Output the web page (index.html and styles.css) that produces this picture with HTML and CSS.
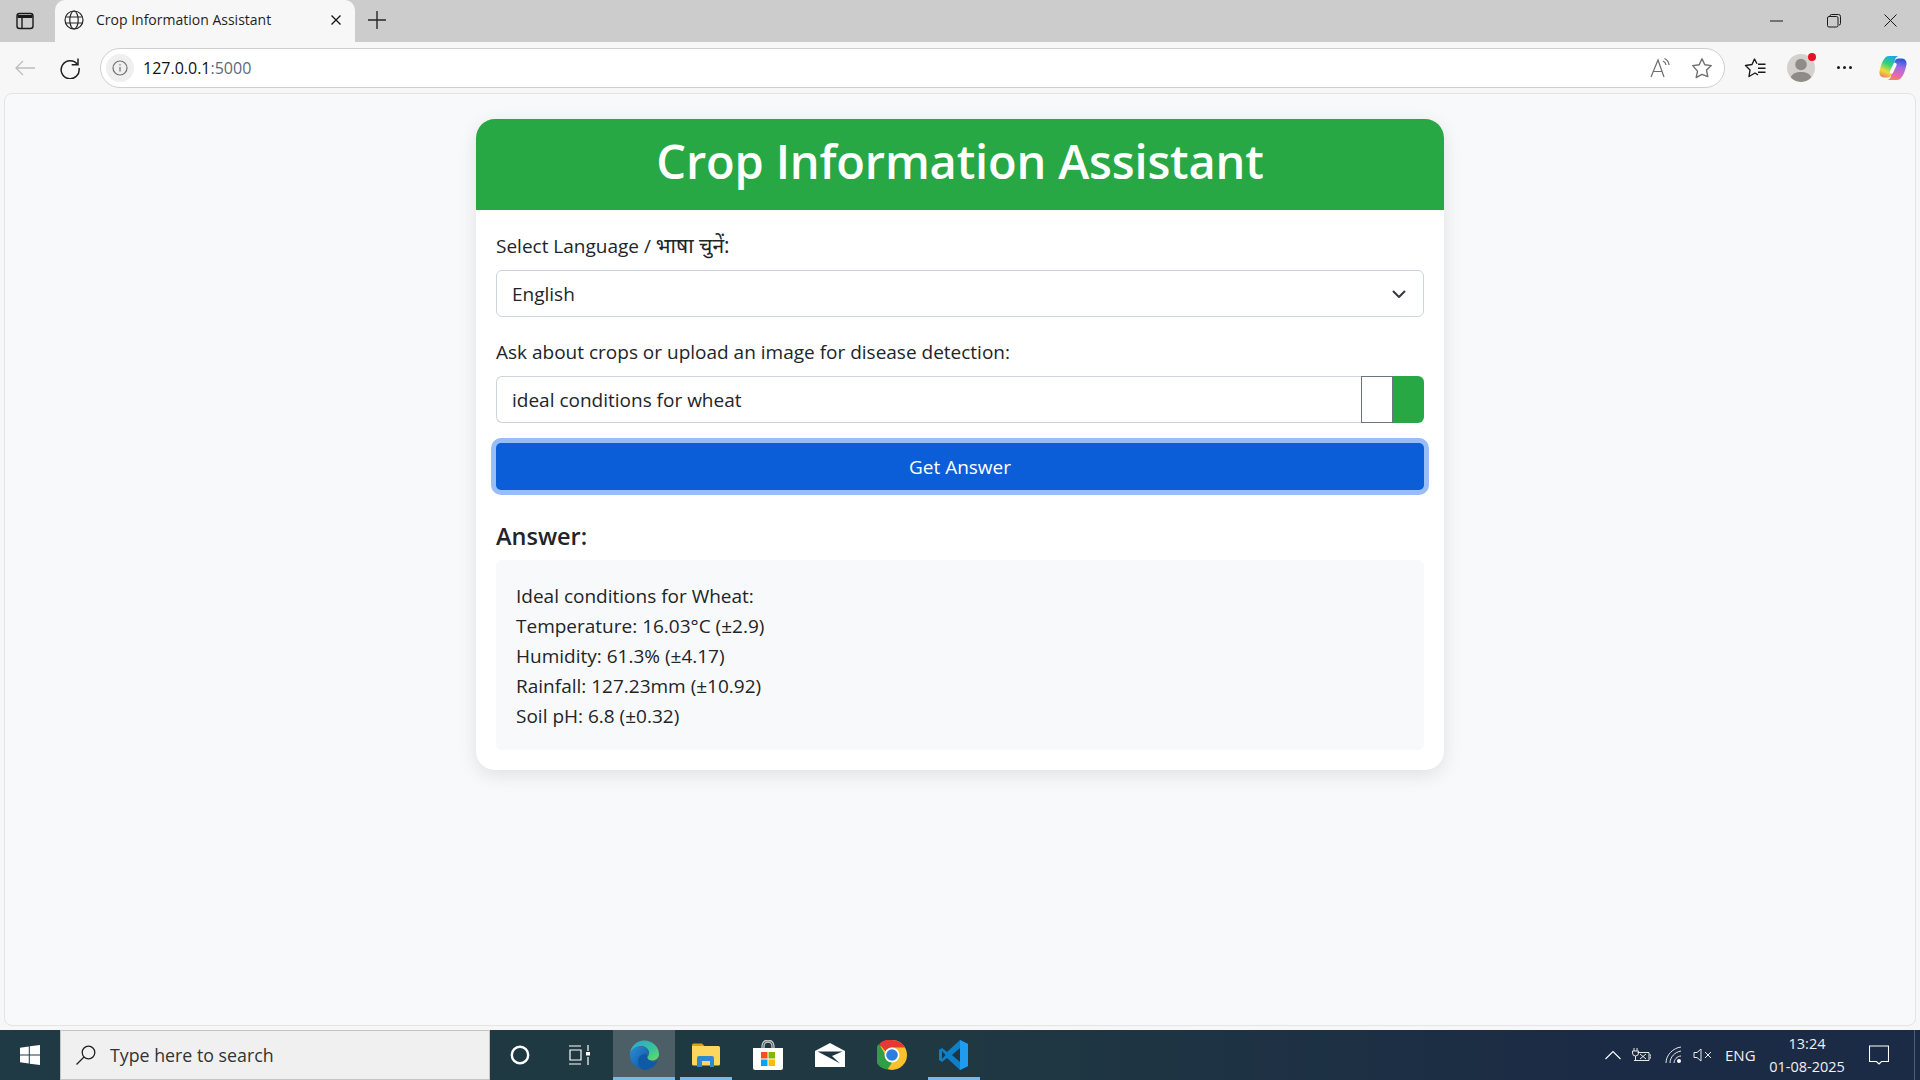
FILE: index.html
```html
<!DOCTYPE html>
<html lang="en">
<head>
<meta charset="utf-8">
<title>Crop Information Assistant</title>
<link rel="stylesheet" href="styles.css">
</head>
<body>
<header class="tabstrip">
  <div class="strip-btn">
    <svg width="20" height="20" viewBox="0 0 20 20" fill="none" stroke="#1a1a1a" stroke-width="1.4"><rect x="2" y="2.5" width="16" height="15" rx="2.5"/><path d="M2.5 5.5h15" stroke-width="3"/><path d="M7 6v11"/></svg>
  </div>
  <div class="tab">
    <svg class="tab-globe" width="20" height="20" viewBox="0 0 20 20" fill="none" stroke="#262626" stroke-width="1.2"><circle cx="10" cy="10" r="9"/><ellipse cx="10" cy="10" rx="4.2" ry="9"/><path d="M1.6 7h16.8M1.6 13h16.8"/></svg>
    <span class="tab-title">Crop Information Assistant</span>
    <svg class="tab-close" width="12" height="12" viewBox="0 0 12 12" stroke="#1a1a1a" stroke-width="1.4"><path d="M1.5 1.5l9 9M10.5 1.5l-9 9"/></svg>
  </div>
  <svg class="new-tab" width="18" height="18" viewBox="0 0 18 18" stroke="#262626" stroke-width="1.4"><path d="M9 0v18M0 9h18"/></svg>
  <div class="win-controls">
    <svg width="14" height="14" viewBox="0 0 14 14" stroke="#1a1a1a" stroke-width="1"><path d="M0 7h13"/></svg>
    <svg width="14" height="14" viewBox="0 0 14 14" fill="none" stroke="#1a1a1a" stroke-width="1"><rect x=".5" y="2.5" width="10.5" height="10.5" rx="1.5"/><path d="M3 2.500V2a1.500 1.500 0 0 1 1.500-1.500H11.500A2 2 0 0 1 13.500 2.500v7A1.500 1.500 0 0 1 12 11"/></svg>
    <svg width="14" height="14" viewBox="0 0 14 14" stroke="#1a1a1a" stroke-width="1"><path d="M.5.500l12 12M12.500.500l-12 12"/></svg>
  </div>
</header>

<nav class="toolbar">
  <svg class="tool-back" width="20" height="16" viewBox="0 0 20 16" fill="none" stroke="#bdbdbd" stroke-width="1.3"><path d="M20 8H1M8 1L1 8l7 7"/></svg>
  <svg class="tool-reload" width="22" height="22" viewBox="0 0 22 22" fill="none" stroke="#1f1f1f" stroke-width="1.5"><path d="M18.500 7.500A9 9 0 1 0 20 11"/><path d="M19 1.500v6.300h-6.300"/></svg>
  <div class="address">
    <span class="info-chip"><svg width="16" height="16" viewBox="0 0 16 16" fill="none" stroke="#707070" stroke-width="1.2"><circle cx="8" cy="8" r="7"/><path d="M8 7v4.500M8 4.200v1.300"/></svg></span>
    <span class="url">127.0.0.1<span class="url-port">:5000</span></span>
    <svg class="addr-read" width="22" height="22" viewBox="0 0 22 22" fill="none" stroke="#6f6f6f" stroke-width="1.2"><path d="M1 20L8 3l6 17M3.500 14.500h9"/><path d="M13 4a5 5 0 0 1 3 4M14.500 1.500a8 8 0 0 1 4.500 6.500"/></svg>
    <svg class="addr-star" width="22" height="22" viewBox="0 0 22 22" fill="none" stroke="#6f6f6f" stroke-width="1.4" stroke-linejoin="round"><path d="M11 1.800l2.800 6 6.500.8-4.800 4.500 1.300 6.500L11 17.300l-5.800 3.300 1.300-6.500L1.700 8.600l6.500-.8z"/></svg>
  </div>
  <svg class="tool-fav" width="22" height="22" viewBox="0 0 22 22" fill="none" stroke="#1a1a1a" stroke-width="1.4" stroke-linejoin="round"><path d="M13 6.800L10.500 2 8 7.500 1.500 8.500 6 13l-1 6.500 6-3.500 3 1.800"/><path d="M14 7.200h7.500M14 11.200h7.500M14 15.200h7.500"/></svg>
  <div class="profile">
    <svg width="28" height="28" viewBox="0 0 28 28"><circle cx="14" cy="14" r="14" fill="#d3d1ce"/><circle cx="14" cy="10.500" r="5.800" fill="#8f8b87"/><path d="M3.800 23.500C5 19.500 9 18 14 18s9 1.500 10.200 5.500A14 14 0 0 1 3.800 23.500z" fill="#8f8b87"/></svg>
    <span class="profile-dot"></span>
  </div>
  <div class="tool-dots"><i></i><i></i><i></i></div>
  <svg class="copilot" width="28" height="28" viewBox="0 0 28 28">
    <defs>
      <linearGradient id="cpa" x1=".7" y1="0" x2=".3" y2="1"><stop offset="0" stop-color="#1aa5ee"/><stop offset=".4" stop-color="#2fd07d"/><stop offset=".75" stop-color="#f0dc3c"/><stop offset="1" stop-color="#f08a5a"/></linearGradient>
      <linearGradient id="cpb" x1=".6" y1="0" x2=".4" y2="1"><stop offset="0" stop-color="#2458d8"/><stop offset=".4" stop-color="#a46be6"/><stop offset=".8" stop-color="#e868b0"/><stop offset="1" stop-color="#f28a4a"/></linearGradient>
    </defs>
    <path d="M10 2h9.500c-2 .5-3 2-3.500 4l-3.500 14c-.7 2.500-2 3.500-4 3.500H5c-3 0-5-3-4.500-6C2 10 5 2 10 2z" fill="url(#cpa)"/>
    <path d="M18 26H8.500c2-.5 3-2 3.500-4l3.500-14c.7-2.500 2-3.500 4-3.500H23c3 0 5 3 4.500 6C26 18 23 26 18 26z" fill="url(#cpb)"/>
    <path d="M16 10.500L12.500 18" stroke="#fff" stroke-width="3.400" stroke-linecap="round"/>
  </svg>
</nav>

<main class="viewport">
  <section class="card">
    <h1 class="card-head">Crop Information Assistant</h1>
    <div class="card-body">
      <label class="field-label">Select Language / <span class="hindi">भाषा चुनें:</span></label>
      <div class="control select-control">
        <span>English</span>
        <svg width="16" height="16" viewBox="0 0 16 16" fill="none" stroke="#343a40" stroke-width="2" stroke-linecap="round" stroke-linejoin="round"><path d="M2.500 5.500L8 11l5.500-5.500"/></svg>
      </div>
      <label class="field-label label-tight">Ask about crops or upload an image for disease detection:</label>
      <div class="input-group">
        <div class="control text-control">ideal conditions for wheat</div>
        <span class="file-btn"></span>
        <span class="green-btn"></span>
      </div>
      <button class="submit">Get Answer</button>
      <h2 class="answer-title">Answer:</h2>
      <div class="answer">
        <div>Ideal conditions for Wheat:</div>
        <div>Temperature: 16.03°C (±2.9)</div>
        <div>Humidity: 61.3% (±4.17)</div>
        <div>Rainfall: 127.23mm (±10.92)</div>
        <div>Soil pH: 6.8 (±0.32)</div>
      </div>
    </div>
  </section>
</main>

<footer class="taskbar">
  <div class="start">
    <svg width="20" height="20" viewBox="0 0 20 20" fill="#fff"><path d="M0 2.800l8.800-1.300v8H0zM9.800 1.300L20 0v9.500H9.800zM0 10.500h8.800v8L0 17.200zM9.800 10.500H20V20L9.800 18.700z"/></svg>
  </div>
  <div class="search">
    <svg width="20" height="20" viewBox="0 0 20 20" fill="none" stroke="#1f1f1f" stroke-width="1.300"><circle cx="12.500" cy="7.500" r="6.300"/><path d="M8 12L.5 19.500"/></svg>
    <span>Type here to search</span>
  </div>
  <div class="task-icons">
    <div class="task"><svg width="20" height="20" viewBox="0 0 20 20" fill="none" stroke="#fff" stroke-width="2.400"><circle cx="10" cy="10" r="8.200"/></svg></div>
    <div class="task task-view"><svg width="22" height="20" viewBox="0 0 22 20" fill="none" stroke="#fff" stroke-width="1.200"><path d="M1 1h12M1 19h12M2 5h11v10H2zM20 0v6M20 12v8"/><rect x="18" y="7" width="4" height="3.500" fill="#fff" stroke="none"/></svg></div>
    <div class="task task-active task-on">
      <svg width="30" height="30" viewBox="0 0 30 30">
        <defs>
          <linearGradient id="eda" x1="0" y1="0" x2="1" y2="1"><stop offset="0" stop-color="#2aa6d8"/><stop offset=".6" stop-color="#35c59a"/><stop offset="1" stop-color="#6fdc62"/></linearGradient>
          <linearGradient id="edb" x1="0" y1="0" x2="1" y2="1"><stop offset="0" stop-color="#2b8fd8"/><stop offset="1" stop-color="#0c4f9e"/></linearGradient>
        </defs>
        <path d="M1 13C2 6 8 .5 15 .5 24 .5 30 7 30 14c0 4-3 6.500-7 6.500-3 0-5-1-5-2.500 0-1 2-2 2-5 0-4-3.500-7-7.500-7C8 6 3 9 1 13z" fill="url(#eda)"/>
        <path d="M1 13c2-4 6.500-6.500 11.500-6.500 4 0 7.500 3 7.500 6 0 1-1 1.500-3 1.500-5 0-8 3-8 7 0 3 2 6 5 8C7 29 0 22 1 13z" fill="url(#edb)"/>
        <path d="M9 21c0-4 3-7 8-7 1 0 1 1 1 2 0 3 3 5.500 7 5.500 1.500 0 3-.5 4-1-2 5-7.500 9.500-14 9.500-3.500-1.500-6-5-6-9z" fill="#0f5aa8"/>
      </svg>
    </div>
    <div class="task task-on">
      <svg width="28" height="24" viewBox="0 0 28 24">
        <path d="M0 2a1.500 1.500 0 0 1 1.500-1.500H10l2.500 2.500h-12.500z" fill="#dfa010"/>
        <path d="M0 3h26.500A1.500 1.500 0 0 1 28 4.500V21a1.500 1.500 0 0 1-1.500 1.500h-25A1.500 1.500 0 0 1 0 21z" fill="#fdd65e"/>
        <path d="M5 24v-9a2 2 0 0 1 2-2h13a2 2 0 0 1 2 2v9h-4v-6H10v6z" fill="#2a8ad4"/>
      </svg>
    </div>
    <div class="task">
      <svg width="30" height="30" viewBox="0 0 30 30">
        <path d="M9 9V6a6 6 0 0 1 12 0v3M11 9V6a4 4 0 0 1 8 0v3" fill="none" stroke="#c9c9c9" stroke-width="1.300"/>
        <path d="M0 8h30v20a2 2 0 0 1-2 2H2a2 2 0 0 1-2-2z" fill="#fff"/>
        <rect x="8" y="12" width="6.500" height="6.500" fill="#f25022"/><rect x="15.500" y="12" width="6.500" height="6.500" fill="#7fba00"/><rect x="8" y="19.500" width="6.500" height="6.500" fill="#00a4ef"/><rect x="15.500" y="19.500" width="6.500" height="6.500" fill="#ffb900"/>
      </svg>
    </div>
    <div class="task">
      <svg width="30" height="24" viewBox="0 0 30 24">
        <path d="M15 0l15 8v16H0V8z" fill="#fff"/>
        <path d="M2.500 8.500h25L17 13l8 7.500L15 15z" fill="#1f3640"/>
      </svg>
    </div>
    <div class="task">
      <svg width="30" height="30" viewBox="0 0 30 30">
        <circle cx="15" cy="15" r="15" fill="#fbc02d"/>
        <path d="M15 0a15 15 0 0 1 13 7.500H15a7.500 7.500 0 0 0-6.500 3.750L2 3.900A15 15 0 0 1 15 0z" fill="#e53935"/>
        <path d="M2 3.900l6.500 11.100a7.500 7.500 0 0 0 6.500 7.500l-4.600 7A15 15 0 0 1 2 3.900z" fill="#2f9e44"/>
        <circle cx="15" cy="15" r="7.500" fill="#fff"/><circle cx="15" cy="15" r="5.800" fill="#2f7de1"/>
      </svg>
    </div>
    <div class="task task-on">
      <svg width="30" height="30" viewBox="0 0 30 30">
        <path d="M21 0l8 4v22l-8 4L8 18l-5 4-3-2v-10l3-2 5 4z" fill="#0e7fc9"/>
        <path d="M21 0l8 4v22l-8 4z" fill="#1f9cf0"/>
        <path d="M21 8l-8 7 8 7z" fill="#1f3640"/>
        <path d="M3 11v8l3.500-4z" fill="#1f3640"/>
      </svg>
    </div>
  </div>
  <div class="tray">
    <svg class="tray-chevron" width="16" height="10" viewBox="0 0 16 10" fill="none" stroke="#fff" stroke-width="1.100"><path d="M.5 9L8 1.500 15.500 9"/></svg>
    <svg class="tray-battery" width="20" height="14" viewBox="0 0 20 14" fill="none" stroke="#e8e8e8" stroke-width="1"><path d="M3 0v3M6 0v3M1.500 3h6v2a3 3 0 0 1-6 0zM4.500 8v4"/><path d="M6.500 4.500H18v8H3"/><path d="M18.500 7h1.500v3h-1.500M9 6l6 5M15 6l-6 5"/></svg>
    <svg class="tray-wifi" width="20" height="18" viewBox="0 0 20 18" fill="none" stroke="#e8e8e8" stroke-width="1"><path d="M1 17C1 9 8 2 16 1M5 17C5 11 10 6 16 5M9 17c0-3 3-7 7-7"/><circle cx="14" cy="15" r="2" fill="#fff" stroke="none"/></svg>
    <svg class="tray-volume" width="20" height="14" viewBox="0 0 20 14" fill="none" stroke="#e8e8e8" stroke-width="1"><path d="M1 4.500h3L8 1v12L4 9.500H1zM12 4l6 6M18 4l-6 6"/></svg>
    <span class="tray-lang">ENG</span>
    <div class="clock"><span>13:24</span><span>01-08-2025</span></div>
    <svg class="tray-notif" width="20" height="20" viewBox="0 0 20 20" fill="none" stroke="#fff" stroke-width="1.100"><path d="M.5 1h19v15.500h-7L10 19l-2.500-2.500h-7z"/></svg>
    <span class="show-desktop"></span>
  </div>
</footer>
</body>
</html>
```

FILE: styles.css
```css
* { box-sizing: border-box; }
html, body { height: 100%; }
body {
  margin: 0;
  display: flex;
  flex-direction: column;
  height: 100vh;
  overflow: hidden;
  background: #f7f7f7;
  font-family: "Open Sans", "Noto Sans", "Noto Sans Devanagari", sans-serif;
  color: #212529;
}
svg { display: block; flex: none; }

/* browser chrome */
.tabstrip {
  height: 42px;
  flex: none;
  background: #cccccc;
  display: flex;
  align-items: center;
}
.strip-btn { width: 55px; padding-left: 15px; }
.tab {
  width: 300px;
  height: 42px;
  background: #f7f7f7;
  border-radius: 10px 10px 0 0;
  display: flex;
  align-items: center;
  padding: 0 13px 2px 9px;
}
.tab-title {
  flex: 1;
  margin-left: 12px;
  margin-bottom: 2px;
  font-size: 14px;
  color: #1f1f1f;
  white-space: nowrap;
}
.new-tab { margin-left: 13px; margin-bottom: 2px; }
.win-controls {
  margin-left: auto;
  display: flex;
  gap: 43px;
  padding-right: 22px;
  align-items: center;
}

.toolbar {
  height: 50px;
  flex: none;
  display: flex;
  align-items: center;
  background: #f7f7f7;
  padding-top: 1px;
}
.tool-back { margin-left: 15px; }
.tool-reload { margin-left: 24px; }
.address {
  width: 1625px;
  height: 40px;
  margin-left: 19px;
  background: #fff;
  border: 1px solid #cfcfcf;
  border-radius: 20px;
  display: flex;
  align-items: center;
  padding-left: 5px;
}
.info-chip {
  width: 28px;
  height: 28px;
  border-radius: 50%;
  background: #efefef;
  display: flex;
  align-items: center;
  justify-content: center;
}
.url { margin-left: 9px; font-size: 16px; color: #111; flex: 1; }
.url-port { color: #5a6a7a; }
.addr-read { margin-right: 19px; }
.addr-star { margin-right: 11px; }
.tool-fav { margin-left: 19px; }
.profile { position: relative; margin-left: 21px; }
.profile-dot {
  position: absolute;
  top: -1px;
  right: -1px;
  width: 8px;
  height: 8px;
  border-radius: 50%;
  background: #e81123;
}
.tool-dots { display: flex; gap: 3px; margin-left: 22px; }
.tool-dots i { width: 3px; height: 3px; border-radius: 50%; background: #1a1a1a; }
.copilot { margin-left: 27px; }

/* page */
.viewport {
  flex: 1;
  min-height: 0;
  margin: 1px 4px 4px;
  background: #f8f9fa;
  border: 1px solid #e4e4e4;
  border-radius: 8px;
  padding-top: 25px;
  display: flex;
  justify-content: center;
  align-items: flex-start;
}
.card {
  width: 968px;
  background: #fff;
  border-radius: 19px;
  box-shadow: 0 5px 19px rgba(0, 0, 0, .1);
  overflow: hidden;
}
.card-head {
  margin: 0;
  height: 91px;
  background: #28a745;
  color: #fff;
  font-size: 47px;
  font-weight: 600;
  letter-spacing: -.18px;
  line-height: 84px;
  text-align: center;
}
.card-body { padding: 20px; font-size: 19px; line-height: 30px; }
.field-label { display: block; margin-bottom: 10px; height: 30px; }
.hindi { font-size: 21px; }
.label-tight { margin-bottom: 9px; }
.control {
  height: 47px;
  background: #fff;
  border: 1px solid #ced4da;
  padding: 0 15px;
  display: flex;
  align-items: center;
}
.select-control {
  border-radius: 6px;
  margin-bottom: 20px;
  justify-content: space-between;
  padding-top: 1px;
}
.select-control svg { margin-right: 1px; margin-top: -1px; }
.input-group { display: flex; height: 47px; margin-bottom: 20px; }
.text-control { flex: 1; border-radius: 6px 0 0 6px; border-right: 0; }
.file-btn { width: 32px; background: #fff; border: 1px solid #6c757d; }
.green-btn { width: 31px; background: #28a745; border-radius: 0 6px 6px 0; }
.submit {
  display: block;
  width: 100%;
  height: 47px;
  border: 0;
  border-radius: 5px;
  background: #0b5ed7;
  color: #fff;
  font: inherit;
  box-shadow: 0 0 0 5px #98bdf9;
}
.answer-title {
  margin: 31px 0 9px;
  font-size: 23.5px;
  line-height: 30px;
  font-weight: 600;
}
.answer { background: #f8f9fa; border-radius: 6px; padding: 21px 20px 19px; }

/* taskbar */
.taskbar {
  height: 50px;
  flex: none;
  display: flex;
  align-items: center;
  background: linear-gradient(90deg, #1f3a44 0%, #1f3842 50%, #1b2a45 85%, #1b2a45 100%);
}
.start { width: 60px; display: flex; justify-content: center; }
.search {
  width: 430px;
  height: 50px;
  background: #f0f0f0;
  border: 1px solid #c4c4c4;
  display: flex;
  align-items: center;
  padding-left: 15px;
  gap: 14px;
  font-size: 17.8px;
  color: #333;
}
.task-icons { display: flex; height: 50px; margin-left: -1px; }
.task {
  width: 62px;
  height: 50px;
  display: flex;
  align-items: center;
  justify-content: center;
  position: relative;
}
.task-view svg { margin-right: 6px; }
.task-active { background: #4d5f66; }
.task-on::after {
  content: "";
  position: absolute;
  left: 5px;
  right: 5px;
  bottom: 0;
  height: 3px;
  background: #76b9ed;
}
.task-active::after { left: 0; right: 0; }
.tray {
  margin-left: auto;
  height: 50px;
  display: flex;
  align-items: center;
  color: #f0f0f0;
}
.tray-chevron { margin-right: 10px; }
.tray-battery { margin-right: 14px; }
.tray-wifi { margin-right: 8px; }
.tray-volume { margin-right: 12px; }
.tray-lang { font-size: 15px; width: 32px; }
.clock {
  width: 100px;
  display: flex;
  flex-direction: column;
  align-items: center;
  font-size: 14.5px;
  line-height: 23px;
}
.tray-notif { margin-left: 12px; margin-right: 25px; }
.show-desktop {
  width: 6px;
  height: 50px;
  border-left: 1px solid #4d5c74;
}
```
